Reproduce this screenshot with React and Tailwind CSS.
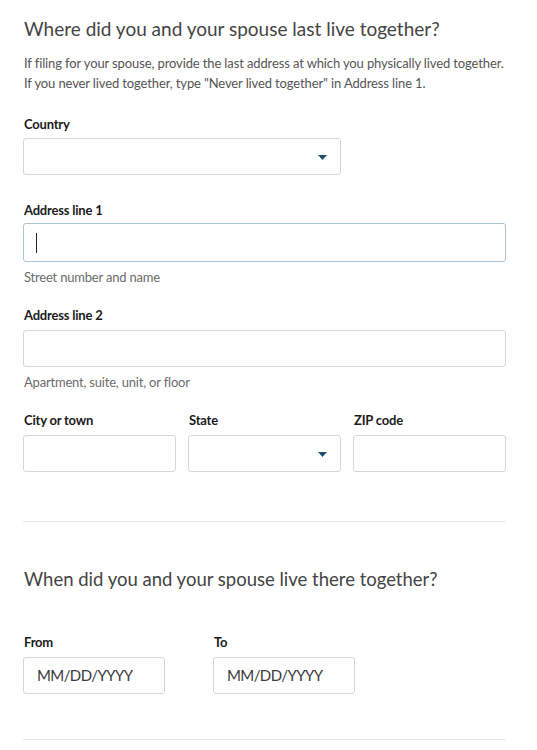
export default function App() {
  const label = "block text-[13px] leading-[18px] font-bold text-[#1b1b1b] tracking-[-0.2px]";
  const box = "h-[37px] bg-white border border-[#d6d6d6] rounded-[3px]";
  const help = "text-[13px] leading-[18px] text-[#6b6b6b] tracking-[-0.2px]";
  const Arrow = () => (
    <svg width="9" height="6" viewBox="0 0 9 6" className="absolute right-[13px] top-[16px]">
      <path d="M0 0 H9 L4.5 5 Z" fill="#1f4f6b" />
    </svg>
  );
  return (
    <div className="w-[537px] h-[750px] bg-white overflow-hidden pl-[23px] pt-[15px]" style={{ fontFamily: "Lato, 'Open Sans', sans-serif" }}>
      <div className="w-[483px]">
        <h1 className="text-[19px] leading-[28px] text-[#444] pl-[1px] whitespace-nowrap">Where did you and your spouse last live together?</h1>
        <p className="mt-[10px] text-[13px] leading-[20px] text-[#555] pl-[1px] whitespace-nowrap tracking-[-0.12px]">
          If filing for your spouse, provide the last address at which you physically lived together.<br />
          If you never lived together, type "Never lived together" in Address line 1.
        </p>
        <label className={label + " mt-[22px] pl-[1px]"}>Country</label>
        <div className={box + " relative mt-[5px] w-[318px]"}><Arrow /></div>

        <label className={label + " mt-[26px] pl-[1px]"}>Address line 1</label>
        <div className="mt-[4px] h-[39px] w-[483px] bg-white border border-[#a9c4d6] rounded-[3px] flex items-center pl-[12px]">
          <div className="w-[1px] h-[20px] bg-[#222]" />
        </div>
        <div className={help + " mt-[6px] pl-[1px]"}>Street number and name</div>

        <label className={label + " mt-[20px] pl-[1px]"}>Address line 2</label>
        <div className={box + " mt-[6px] w-[483px]"} />
        <div className={help + " mt-[6px] pl-[1px]"}>Apartment, suite, unit, or floor</div>

        <div className="mt-[20px] grid grid-cols-3 gap-[12px]">
          <div>
            <label className={label + " pl-[1px]"}>City or town</label>
            <div className={box + " mt-[6px]"} />
          </div>
          <div>
            <label className={label + " pl-[1px]"}>State</label>
            <div className={box + " relative mt-[6px]"}><Arrow /></div>
          </div>
          <div>
            <label className={label + " pl-[1px]"}>ZIP code</label>
            <div className={box + " mt-[6px]"} />
          </div>
        </div>

        <div className="mt-[49px] h-[1px] bg-[#e3e8ec]" />

        <h2 className="mt-[43px] text-[18.5px] leading-[28px] text-[#444] pl-[1px] whitespace-nowrap">When did you and your spouse live there together?</h2>

        <div className="mt-[40px] flex gap-[48px]">
          <div>
            <label className={label + " pl-[1px]"}>From</label>
            <div className={box + " mt-[6px] w-[142px] flex items-center pl-[13px] text-[15px] tracking-[-0.6px] text-[#3a3a3a]"}>MM/DD/YYYY</div>
          </div>
          <div>
            <label className={label + " pl-[1px]"}>To</label>
            <div className={box + " mt-[6px] w-[142px] flex items-center pl-[13px] text-[15px] tracking-[-0.6px] text-[#3a3a3a]"}>MM/DD/YYYY</div>
          </div>
        </div>

        <div className="mt-[45px] h-[1px] bg-[#e3e8ec]" />
      </div>
    </div>
  );
}
